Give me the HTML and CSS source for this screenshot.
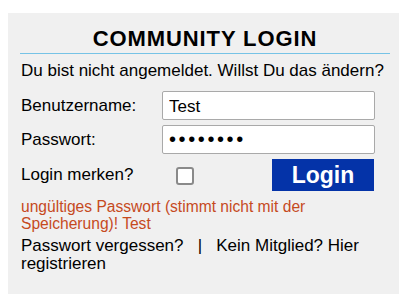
FILE: index.html
```html
<!DOCTYPE html>
<html lang="de">
<head>
    <meta charset="UTF-8">
    <title>Community Login</title>
    <link rel="stylesheet" href="styles.css">
</head>
<body>
    <div class="login-box">
        <h1>COMMUNITY LOGIN</h1>
        <p class="intro">Du bist nicht angemeldet. Willst Du das ändern?</p>
        <form class="login-form">
            <label for="user">Benutzername:</label>
            <input type="text" id="user" value="Test">
            <label for="pass">Passwort:</label>
            <input type="password" id="pass" value="testtest">
            <label for="remember">Login merken?</label>
            <div class="remember-row">
                <input type="checkbox" id="remember">
                <button type="button" class="btn-login">Login</button>
            </div>
        </form>
        <p class="error">ungültiges Passwort (stimmt nicht mit der Speicherung)! Test</p>
        <p class="links">Passwort vergessen? &nbsp; | &nbsp; Kein Mitglied? Hier registrieren</p>
    </div>
</body>
</html>
```

FILE: styles.css
```css
body {
    margin: 0;
    overflow: hidden;
    background: #fff;
    font-family: "Liberation Sans", Arial, sans-serif;
    color: #000;
}
.login-box {
    margin: 13px 0 0 8px;
    width: 400px;
    height: 281px;
    box-sizing: border-box;
    padding: 13px 0 0 12px;
    background-color: #f0f0f0;
}
h1 {
    width: 370px;
    margin: 0;
    padding-bottom: 2px;
    font-size: 22px;
    letter-spacing: 0.9px;
    line-height: 25px;
    text-align: center;
    border-bottom: 1px solid #76c3e6;
}
.intro {
    margin: 7px 0 0 1px;
    font-size: 17px;
    line-height: 19px;
}
.login-form {
    display: grid;
    grid-template-columns: 141px 213px;
    row-gap: 5px;
    align-items: center;
    margin: 11px 0 0 1px;
}
.login-form label {
    font-size: 17px;
}
.login-form input[type="text"],
.login-form input[type="password"] {
    height: 29px;
    box-sizing: border-box;
    margin: 0;
    padding: 2px 6px 0;
    border: 1px solid #a9a9a9;
    border-radius: 2px;
    background: #fff;
    font-family: "Liberation Sans", Arial, sans-serif;
    font-size: 17px;
}
.login-form #pass {
    font-size: 20px;
    letter-spacing: 2.6px;
    padding-top: 0;
}
.remember-row {
    display: flex;
    align-items: center;
    justify-content: space-between;
}
.remember-row input {
    width: 18px;
    height: 18px;
    margin: 1px 0 0 14px;
    appearance: none;
    border: 2px solid #8a8a8a;
    border-radius: 3px;
    background: #fff;
}
.btn-login {
    width: 102px;
    height: 32px;
    border: none;
    background-color: #0433a8;
    color: #fff;
    font-family: "Liberation Sans", Arial, sans-serif;
    font-size: 23px;
    font-weight: bold;
    padding: 0;
    margin-right: 1px;
}
.error {
    width: 370px;
    margin: 7px 0 0 1px;
    color: #c64a1e;
    font-size: 15.6px;
    line-height: 17px;
}
.links {
    width: 370px;
    margin: 5px 0 0 1px;
    font-size: 17px;
    line-height: 18px;
}
```
